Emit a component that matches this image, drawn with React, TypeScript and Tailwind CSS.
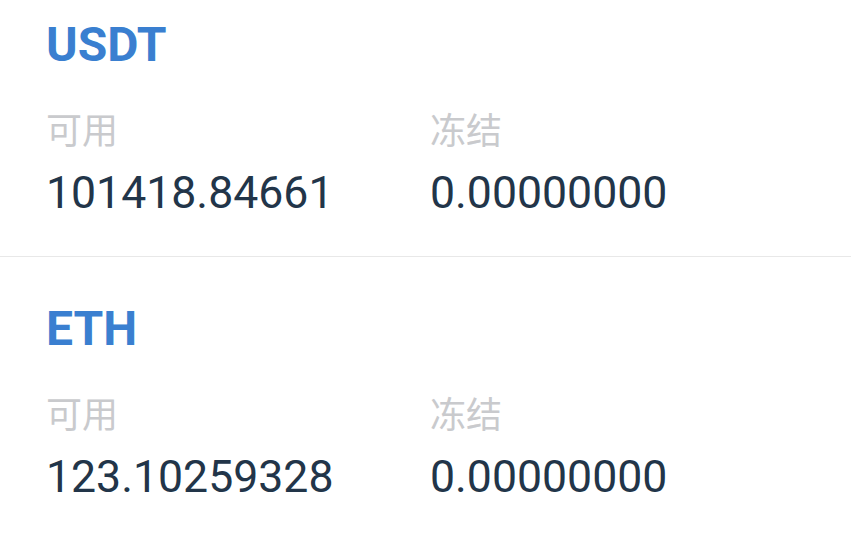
import React from 'react';

interface Asset {
  symbol: string;
  available: string;
  frozen: string;
}

const assets: Asset[] = [
  { symbol: 'USDT', available: '101418.84661', frozen: '0.00000000' },
  { symbol: 'ETH', available: '123.10259328', frozen: '0.00000000' },
];

const AssetRow: React.FC<{ asset: Asset; first?: boolean }> = ({ asset, first }) => {
  return (
    <div className={first ? 'pt-[21px] pb-[40px] pl-[46px] border-b border-[#e8e8e8]' : 'pt-[48px] pb-[40px] pl-[46px] border-b border-[#e8e8e8]'}>
      <div className="text-[48px] leading-[48px] font-bold text-[#3a7fd0]">{asset.symbol}</div>
      <div className="grid grid-cols-[384px_1fr] mt-[45px]">
        <div>
          <div className="text-[36px] leading-[36px] text-[#c9cacd]">可用</div>
          <div className="mt-[21px] text-[44.6px] leading-[45px] text-[#223549]">{asset.available}</div>
        </div>
        <div>
          <div className="text-[36px] leading-[36px] text-[#c9cacd]">冻结</div>
          <div className="mt-[21px] text-[44.6px] leading-[45px] text-[#223549]">{asset.frozen}</div>
        </div>
      </div>
    </div>
  );
};

export default function App() {
  return (
    <div className="w-[851px] h-[538px] overflow-hidden bg-white font-['Roboto','Noto_Sans_CJK_SC',sans-serif]">
      {assets.map((a, i) => (
        <AssetRow key={a.symbol} asset={a} first={i === 0} />
      ))}
    </div>
  );
}
